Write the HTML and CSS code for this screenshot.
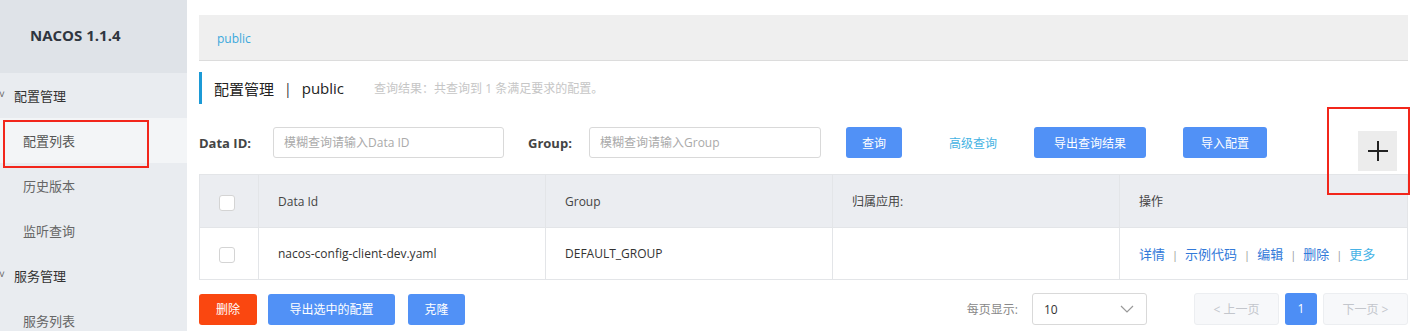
FILE: index.html
```html
<!DOCTYPE html>
<html lang="zh-CN">
<head>
  <meta charset="UTF-8" />
  <meta name="viewport" content="width=device-width, initial-scale=1.0">
  <title>Nacos 配置列表</title>
  <link rel="stylesheet" href="styles.css">
</head>
<body>
  <div class="layout">
    <aside class="sidebar">
      <div class="brand">NACOS 1.1.4</div>
      <ul class="menu">
        <li class="group"><span class="arrow">˅</span>配置管理</li>
        <li class="item active">配置列表</li>
        <li class="item">历史版本</li>
        <li class="item">监听查询</li>
        <li class="group"><span class="arrow">˅</span>服务管理</li>
        <li class="item">服务列表</li>
      </ul>
      <div class="mark mark-menu"></div>
    </aside>

    <main class="content">
      <div class="crumb"><span>public</span></div>

      <div class="title">
        <span class="title-main">配置管理</span>
        <span class="title-sep">|</span>
        <span class="title-main">public</span>
        <span class="title-hint">查询结果：共查询到 1 条满足要求的配置。</span>
      </div>

      <div class="search">
        <label class="lbl">Data ID:</label>
        <input class="field field-id" placeholder="模糊查询请输入Data ID">
        <label class="lbl lbl-group">Group:</label>
        <input class="field field-group" placeholder="模糊查询请输入Group">
        <button class="btn btn-query">查询</button>
        <a class="link">高级查询</a>
        <button class="btn btn-export">导出查询结果</button>
        <button class="btn btn-import">导入配置</button>
        <div class="add-wrap">
          <button class="btn-add">
            <svg width="22" height="22" viewBox="0 0 22 22"><path d="M11 1v20M1 11h20" stroke="#222" stroke-width="2"/></svg>
          </button>
          <div class="mark mark-add"></div>
        </div>
      </div>

      <table class="grid">
        <thead>
          <tr>
            <th class="col-check"><span class="check"></span></th>
            <th class="col-id">Data Id</th>
            <th class="col-group">Group</th>
            <th class="col-app">归属应用:</th>
            <th>操作</th>
          </tr>
        </thead>
        <tbody>
          <tr>
            <td class="col-check"><span class="check"></span></td>
            <td>nacos-config-client-dev.yaml</td>
            <td>DEFAULT_GROUP</td>
            <td></td>
            <td class="ops">
              <a>详情</a><i>|</i><a>示例代码</a><i>|</i><a>编辑</a><i>|</i><a>删除</a><i>|</i><a class="more">更多</a>
            </td>
          </tr>
        </tbody>
      </table>

      <div class="footer">
        <button class="btn btn-danger">删除</button>
        <button class="btn btn-sel">导出选中的配置</button>
        <button class="btn btn-clone">克隆</button>
        <div class="spacer"></div>
        <span class="per-page">每页显示:</span>
        <div class="select">
          <span>10</span>
          <svg width="14" height="8" viewBox="0 0 14 8"><path d="M1 1l6 6 6-6" fill="none" stroke="#999" stroke-width="1.2"/></svg>
        </div>
        <div class="pager">
          <span class="pg pg-prev">&lt; 上一页</span>
          <span class="pg pg-cur">1</span>
          <span class="pg pg-next">下一页 &gt;</span>
        </div>
      </div>
    </main>
  </div>
</body>
</html>
```

FILE: styles.css
```css
* {
  box-sizing: border-box;
}

body {
  margin: 0;
  font-family: "Open Sans", "Noto Sans CJK SC", sans-serif;
  color: #333;
  background: white;
}

.layout {
  display: flex;
  height: 331px;
  overflow: hidden;
}

/* sidebar */
.sidebar {
  position: relative;
  width: 187px;
  flex-shrink: 0;
  background: #e9ecf0;
}

.brand {
  height: 73px;
  line-height: 70px;
  padding-left: 30px;
  background: #dfe3e8;
  font-weight: bold;
  font-size: 15px;
  color: #2f3640;
}

.menu {
  list-style: none;
  margin: 0;
  padding: 0;
}

.menu li {
  height: 45px;
  line-height: 46px;
  font-size: 13px;
}

.group {
  padding-left: 14px;
  color: #333;
  position: relative;
}

.arrow {
  position: absolute;
  left: -1px;
  top: -2px;
  font-size: 10px;
  color: #666;
}

.item {
  padding-left: 23px;
  color: #666;
}

.item.active {
  background: #f3f5f7;
  color: #555;
}

.mark {
  position: absolute;
  border: 2px solid #f2261b;
}

.mark-menu {
  left: 3px;
  top: 120px;
  width: 146px;
  height: 48px;
}

/* main */
.content {
  flex: 1;
  padding: 15px 14px 0 12px;
}

.crumb {
  height: 46px;
  background: #efefef;
  border-bottom: 1px solid #dcdcdc;
  padding-left: 18px;
  line-height: 48px;
  font-size: 12px;
  color: #3aa8dc;
}

.title {
  margin-top: 11px;
  height: 32px;
  border-left: 3px solid #1c9ad6;
  padding-left: 12px;
  display: flex;
  align-items: center;
}

.title-main {
  font-size: 15px;
  color: #222;
}

.title-sep {
  margin: 0 10px;
  font-size: 14px;
  color: #333;
}

.title-hint {
  margin-left: 30px;
  font-size: 12px;
  color: #c6c6c6;
}

.search {
  display: flex;
  align-items: center;
  height: 31px;
  margin-top: 23px;
}

.lbl {
  font-size: 13px;
  font-weight: bold;
  color: #444;
  width: 74px;
}

.lbl-group {
  width: 61px;
  margin-left: 24px;
}

.field {
  height: 31px;
  border: 1px solid #d9d9d9;
  border-radius: 3px;
  padding: 0 10px;
  font-size: 12px;
  font-family: inherit;
}

.field::placeholder {
  color: #aaa;
}

.field-id {
  width: 231px;
}

.field-group {
  width: 232px;
}

.btn {
  height: 31px;
  border: none;
  border-radius: 3px;
  background: #5191f6;
  color: white;
  font-size: 12px;
  font-family: inherit;
  padding: 0;
}

.btn-query {
  width: 56px;
  margin-left: 25px;
}

.link {
  margin-left: 47px;
  font-size: 12px;
  color: #44b3e3;
}

.btn-export {
  width: 112px;
  margin-left: 37px;
}

.btn-import {
  width: 84px;
  margin-left: 37px;
}

.add-wrap {
  position: relative;
  align-self: flex-start;
  margin-left: 91px;
  margin-top: 4px;
}

.btn-add {
  width: 39px;
  height: 40px;
  border: none;
  background: #ececec;
  padding: 0;
  display: flex;
  align-items: center;
  justify-content: center;
}

.mark-add {
  left: -31px;
  top: -24px;
  width: 83px;
  height: 88px;
}

/* table */
.grid {
  width: 100%;
  margin-top: 16px;
  border-collapse: collapse;
  font-size: 12px;
}

.grid th,
.grid td {
  text-align: left;
  border: 1px solid #e3e5e8;
  padding: 0 0 0 19px;
  font-weight: normal;
}

.grid th {
  height: 53px;
  background: #ebedf1;
  color: #444;
}

.grid td {
  height: 52px;
  color: #333;
}

.grid .col-check {
  width: 59px;
}

.col-id,
.col-group,
.col-app {
  width: 287px;
}

.check {
  display: inline-block;
  width: 16px;
  height: 16px;
  border: 1px solid #d4d4d4;
  border-radius: 3px;
  background: white;
  vertical-align: -6px;
  margin-top: -16px;
}

.ops {
  font-size: 13px;
}

.ops a {
  color: #3279d9;
}

.ops i {
  font-style: normal;
  color: #999;
  margin: 0 7px;
  font-size: 11px;
}

.ops .more {
  color: #47b3e6;
}

/* footer */
.footer {
  display: flex;
  align-items: center;
  margin-top: 13px;
}

.btn-danger {
  background: #fa4710;
  width: 58px;
}

.btn-sel {
  width: 127px;
  margin-left: 11px;
}

.btn-clone {
  width: 57px;
  margin-left: 13px;
}

.spacer {
  flex: 1;
}

.per-page {
  font-size: 12px;
  color: #888;
}

.select {
  width: 115px;
  height: 32px;
  margin-left: 14px;
  border: 1px solid #d9d9d9;
  border-radius: 3px;
  display: flex;
  align-items: center;
  justify-content: space-between;
  padding: 0 12px 0 11px;
  font-size: 12px;
  color: #333;
}

.pager {
  display: flex;
  margin-left: 47px;
}

.pg {
  height: 32px;
  line-height: 32px;
  font-size: 12px;
  border-radius: 3px;
  text-align: center;
}

.pg-prev,
.pg-next {
  width: 85px;
  border: 1px solid #eceef1;
  background: #f7f8fa;
  color: #c3c6cc;
}

.pg-cur {
  width: 32px;
  margin: 0 6px;
  background: #4d8ef5;
  color: white;
}
```
